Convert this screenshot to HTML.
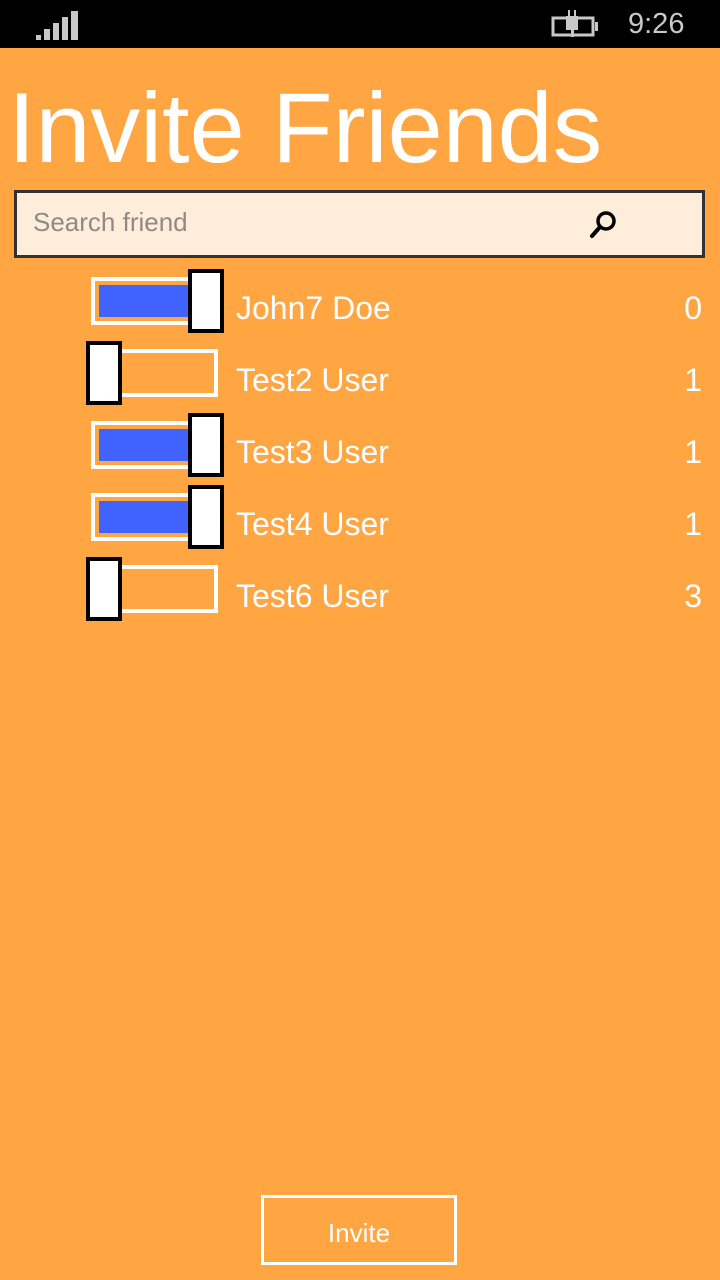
<!DOCTYPE html>
<html><head><style>
body{margin:0;width:720px;height:1280px;background:#FFA643;position:relative;overflow:hidden;font-family:"Liberation Sans",sans-serif;color:#fff}
.sb{position:absolute;left:0;top:0;width:720px;height:48px;background:#000}
.t{position:absolute;left:8px;top:68px;font-size:99px;line-height:120px;white-space:nowrap;letter-spacing:0px}
.search{position:absolute;left:14px;top:190px;width:685px;height:62px;border:3px solid #333;background:#FFEDDB}
.search span{position:absolute;left:16px;top:14px;font-size:26px;color:#8f8a85}
.tr{position:absolute;width:119px;height:40px;border:4px solid #fff;box-sizing:content-box}
.tr.off{width:115px}
.tr.on i{position:absolute;left:4px;top:4px;width:92px;height:32px;background:#4063FF}
.th{position:absolute;width:28px;height:56px;border:4px solid #000;background:#fff}
.n{position:absolute;left:236px;font-size:32px;line-height:40px}
.c{position:absolute;right:18px;font-size:32px;line-height:40px}
.btn{position:absolute;left:261px;top:1195px;width:190px;height:64px;border:3px solid #fff;font-size:26px;text-align:center;line-height:70px}
</style></head><body>
<div class="sb">
<div style="position:absolute;left:36px;top:35px;width:5px;height:5px;background:#c8c8c8"></div>
<div style="position:absolute;left:44px;top:29px;width:6px;height:11px;background:#c8c8c8"></div>
<div style="position:absolute;left:53px;top:23px;width:6px;height:17px;background:#c8c8c8"></div>
<div style="position:absolute;left:62px;top:17px;width:6px;height:23px;background:#c8c8c8"></div>
<div style="position:absolute;left:71px;top:11px;width:7px;height:29px;background:#c8c8c8"></div>
<svg style="position:absolute;left:551px;top:10px" width="50" height="30" viewBox="0 0 50 30"><rect x="2" y="8" width="40" height="17" fill="none" stroke="#c8c8c8" stroke-width="3"/><rect x="44" y="12" width="3" height="9" fill="#c8c8c8"/><rect x="15" y="6" width="12" height="14" fill="#c8c8c8"/><rect x="17" y="0" width="2" height="7" fill="#c8c8c8"/><rect x="23" y="0" width="2" height="7" fill="#c8c8c8"/><rect x="20" y="19" width="3" height="8" fill="#c8c8c8"/></svg>
<div style="position:absolute;left:628px;top:8px;font-size:29px;color:#c8c8c8">9:26</div>
</div>
<div class="t">Invite Friends</div>
<div class="search"><span>Search friend</span>
<svg style="position:absolute;left:570px;top:16px" width="32" height="32" viewBox="0 0 32 32"><circle cx="19" cy="12" r="8" fill="none" stroke="#000" stroke-width="3.5"/><line x1="13" y1="18" x2="5" y2="27" stroke="#000" stroke-width="4" stroke-linecap="round"/></svg>
</div>

<div class="tr on" style="left:91px;top:277px"><i></i></div><div class="th" style="left:188px;top:269px"></div>
<div class="n" style="top:288px">John7 Doe</div><div class="c" style="top:288px">0</div>

<div class="tr off" style="left:95px;top:349px"></div><div class="th" style="left:86px;top:341px"></div>
<div class="n" style="top:360px">Test2 User</div><div class="c" style="top:360px">1</div>

<div class="tr on" style="left:91px;top:421px"><i></i></div><div class="th" style="left:188px;top:413px"></div>
<div class="n" style="top:432px">Test3 User</div><div class="c" style="top:432px">1</div>

<div class="tr on" style="left:91px;top:493px"><i></i></div><div class="th" style="left:188px;top:485px"></div>
<div class="n" style="top:504px">Test4 User</div><div class="c" style="top:504px">1</div>

<div class="tr off" style="left:95px;top:565px"></div><div class="th" style="left:86px;top:557px"></div>
<div class="n" style="top:576px">Test6 User</div><div class="c" style="top:576px">3</div>

<div class="btn">Invite</div>
</body></html>
